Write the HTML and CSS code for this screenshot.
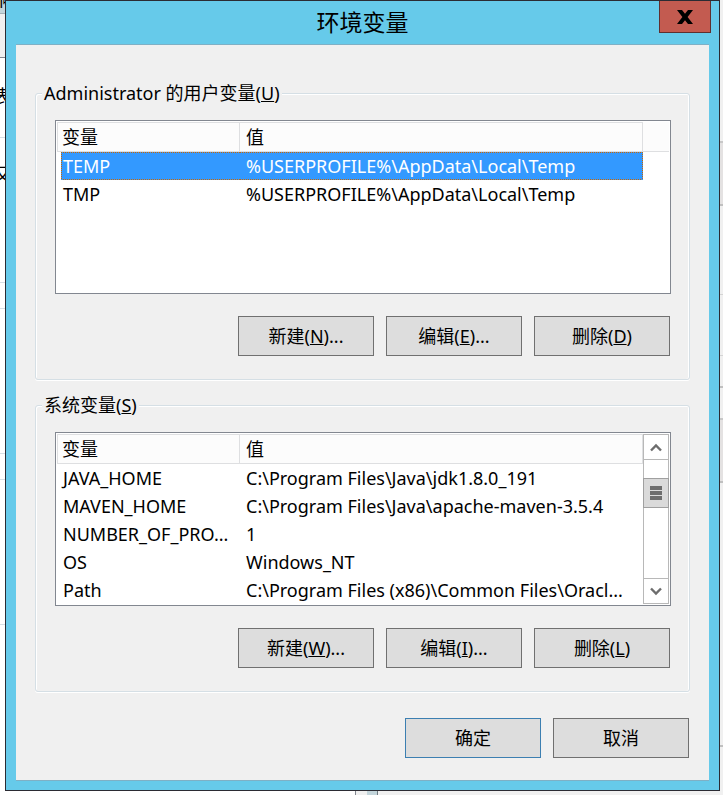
FILE: index.html
```html
<!DOCTYPE html>
<html lang="zh-CN">
<head>
<meta charset="utf-8">
<title>环境变量</title>
<link rel="stylesheet" href="styles.css">
</head>
<body>
<div class="desktop">
  <div class="strip strip-left" aria-hidden="true">
    <div class="seg seg-title">响</div>
    <div class="seg seg-bar"></div>
    <div class="seg seg-a">表</div>
    <div class="seg seg-b">又</div>
    <div class="seg seg-gap"></div>
    <div class="seg seg-c"></div>
    <div class="seg seg-gap"></div>
    <div class="seg seg-c"></div>
    <div class="seg seg-rest"></div>
  </div>

  <main class="dialog">
    <header class="titlebar">
      <h1 class="title">环境变量</h1>
      <button class="close" type="button" aria-label="关闭">
        <svg width="16" height="14" viewBox="0 0 16 14"><path d="M0 0H5L8 3.8L11 0H16L10.6 7L16 14H11L8 10.2L5 14H0L5.4 7Z"/></svg>
      </button>
    </header>

    <form class="client">
      <fieldset class="group">
        <legend>Administrator 的用户变量(<u>U</u>)</legend>
        <div class="list">
          <table class="vars">
            <thead><tr><th class="name">变量</th><th>值</th><th class="gutter"></th></tr></thead>
            <tbody>
              <tr class="selected"><td>TEMP</td><td>%USERPROFILE%\AppData\Local\Temp</td></tr>
              <tr><td>TMP</td><td>%USERPROFILE%\AppData\Local\Temp</td></tr>
            </tbody>
          </table>
        </div>
        <div class="actions">
          <button class="btn" type="button">新建(<u>N</u>)...</button>
          <button class="btn" type="button">编辑(<u>E</u>)...</button>
          <button class="btn" type="button">删除(<u>D</u>)</button>
        </div>
      </fieldset>

      <fieldset class="group">
        <legend>系统变量(<u>S</u>)</legend>
        <div class="list">
          <table class="vars">
            <thead><tr><th class="name">变量</th><th>值</th></tr></thead>
            <tbody>
              <tr><td>JAVA_HOME</td><td>C:\Program Files\Java\jdk1.8.0_191</td></tr>
              <tr><td>MAVEN_HOME</td><td>C:\Program Files\Java\apache-maven-3.5.4</td></tr>
              <tr><td>NUMBER_OF_PRO...</td><td>1</td></tr>
              <tr><td>OS</td><td>Windows_NT</td></tr>
              <tr><td>Path</td><td>C:\Program Files (x86)\Common Files\Oracl...</td></tr>
            </tbody>
          </table>
          <div class="scrollbar">
            <button class="arrow" type="button" aria-label="向上滚动">
              <svg width="12" height="9" viewBox="0 0 12 9"><path d="M1 7.5L6 2.5L11 7.5"/></svg>
            </button>
            <div class="track"><div class="thumb"><i></i><i></i><i></i></div></div>
            <button class="arrow" type="button" aria-label="向下滚动">
              <svg width="12" height="9" viewBox="0 0 12 9"><path d="M1 1.5L6 6.5L11 1.5"/></svg>
            </button>
          </div>
        </div>
        <div class="actions">
          <button class="btn" type="button">新建(<u>W</u>)...</button>
          <button class="btn" type="button">编辑(<u>I</u>)...</button>
          <button class="btn" type="button">删除(<u>L</u>)</button>
        </div>
      </fieldset>

      <div class="actions footer">
        <button class="btn default" type="submit">确定</button>
        <button class="btn" type="button">取消</button>
      </div>
    </form>
  </main>

  <div class="strip strip-right" aria-hidden="true">
    <div class="seg seg-r1"></div>
    <div class="seg seg-r2"></div>
    <div class="seg seg-r3"></div>
    <div class="seg seg-r4"></div>
    <div class="seg seg-r5"></div>
    <div class="seg seg-r6"></div>
    <div class="seg seg-r2"></div>
    <div class="seg seg-rest"></div>
    <div class="seg seg-r7"></div>
  </div>
  <div class="strip strip-bottom" aria-hidden="true">
    <div class="seg seg-page"></div>
    <div class="seg seg-scroll"></div>
    <div class="seg seg-edge"></div>
    <div class="seg seg-panel"></div>
  </div>
</div>
</body>
</html>
```
FILE: styles.css
```css
* { box-sizing: border-box; }

body {
  margin: 0;
  background: #fff;
  color: #000;
  font: 18px/28px "Noto Sans", "Noto Sans CJK SC", sans-serif;
}

button { font: inherit; color: inherit; padding: 0; cursor: default; }

.desktop {
  display: grid;
  grid-template-columns: 5px minmax(0, 1fr) 3px;
  grid-template-rows: 1fr 4px;
  min-height: 100vh;
}

/* windows partly hidden behind the dialog */
.strip { display: flex; flex-direction: column; overflow: hidden; }
.seg { display: flex; align-items: center; justify-content: center; overflow: hidden; }
.seg-title { height: 14px; background: #c3d5db; border-bottom: 1px solid #a3b1b8; align-items: flex-end; }
.seg-bar { height: 44px; background: #f0f0f0; border-bottom: 1px solid #828790; }
.seg-a { height: 80px; border-bottom: 1px solid #d5dfe5; padding-bottom: 4px; }
.seg-b { height: 145px; border-bottom: 1px solid #d5dfe5; align-items: flex-start; padding-top: 22px; }
.seg-gap { height: 26px; border-bottom: 1px solid #d5dfe5; }
.seg-c { height: 145px; border-bottom: 1px solid #d5dfe5; }
.seg-rest { flex: 1; }
.strip-right { background: #f0f0f0; }
.seg-r1 { height: 143px; border-bottom: 2px solid #c8c8c8; }
.seg-r2 { height: 63px; background: #e4e2e2; border-bottom: 2px solid #c0c0c0; }
.seg-r3 { height: 89px; border-bottom: 1px solid #d5d5d5; }
.seg-r4 { height: 61px; border-bottom: 1px solid #d5d5d5; }
.seg-r5 { height: 32px; border-bottom: 2px solid #c0c0c0; }
.seg-r6 { height: 32px; border-bottom: 2px solid #c8c8c8; }
.seg-r7 { height: 46px; border-top: 2px solid #c0c0c0; }
.strip-bottom { grid-column: 1 / -1; flex-direction: row; background: #f0f0f0; }
.seg-page { flex: 0 0 356px; background: #fff; border-right: 1px solid #828790; }
.seg-scroll { width: 11px; }
.seg-edge { width: 11px; background: #c3d5db; border-right: 1px solid #6f7a80; }

.dialog {
  display: flex;
  flex-direction: column;
  padding: 0 10px 9px;
  background: #66caea;
  border: 1px solid #2b2b33;
}

.titlebar {
  display: grid;
  grid-template-columns: 1fr auto 1fr;
  height: 43px;
}
.title {
  grid-column: 2;
  margin: 0;
  font-size: 23px;
  font-weight: 400;
  line-height: 43px;
}
.close {
  justify-self: end;
  display: flex;
  align-items: center;
  justify-content: center;
  width: 52px;
  height: 32px;
  margin-right: -2px;
  background: #c35b50;
  border: 1px solid #5f2f2f;
  border-top: 0;
}

.client {
  flex: 1;
  padding: 34px 19px 22px;
  background: #f0f0f0;
  border-top: 1px solid #7fb0c5;
  border-bottom: 1px solid #7fb0c5;
}

.group {
  min-width: 0;
  margin: 0 0 11px;
  padding: 13px 18px 23px 19px;
  border: 1px solid #d5dfe5;
  border-radius: 3px;
  box-shadow: inset 1px 1px #fff, inset -1px 0 #fff, 0 1px #fff;
}
.group legend {
  margin-left: -13px;
  padding: 0 2px;
  background: #f0f0f0;
}

.list {
  display: flex;
  align-items: flex-start;
  height: 174px;
  padding: 1px;
  background: #fff;
  border: 1px solid #828790;
}
.vars {
  flex: 1;
  min-width: 0;
  table-layout: fixed;
  border-spacing: 0;
  text-align: left;
  white-space: nowrap;
}
.vars th {
  height: 30px;
  padding: 0 6px;
  font-weight: 400;
  background: #fcfcfc;
  border: solid #dedfe1;
  border-width: 1px 1px 1px 0;
}
.vars .name { width: 183px; padding-left: 4px; border-left-width: 1px; }
.vars .gutter { width: 26px; border-top-color: #fcfcfc; border-right: 0; }
.vars td { height: 28px; padding: 0 6px; overflow: hidden; }

/* selection bar with a dotted focus line round it */
.vars .selected td {
  --dots-x: repeating-linear-gradient(90deg, #c60 0 1px, #39f 1px 2px);
  --dots-y: repeating-linear-gradient(#c60 0 1px, #39f 1px 2px);
  color: #fff;
  background:
    var(--dots-y) right / 1px 100% no-repeat,
    var(--dots-x) top / 100% 1px no-repeat,
    var(--dots-x) bottom / 100% 1px no-repeat,
    #39f;
}
.vars .selected td:first-child {
  padding-left: 2px;
  border-left: 4px solid #fff;
  background:
    var(--dots-y) left / 1px 100% no-repeat,
    var(--dots-x) top / 100% 1px no-repeat,
    var(--dots-x) bottom / 100% 1px no-repeat,
    #39f;
}

.scrollbar { display: flex; flex-direction: column; width: 26px; height: 100%; }
.arrow {
  display: flex;
  align-items: center;
  justify-content: center;
  height: 26px;
  background: #fff;
  border: 1px solid #b8b8b8;
}
.arrow path { fill: none; stroke: #6d6d6d; stroke-width: 2.4; }
.track { flex: 1; padding-top: 18px; border: solid #b8b8b8; border-width: 0 1px; }
.thumb {
  display: flex;
  flex-direction: column;
  align-items: center;
  justify-content: center;
  gap: 1px;
  height: 30px;
  margin: 0 -1px;
  background: #dadada;
  border: 1px solid #a0a0a0;
}
.thumb i { width: 12px; height: 4px; background: #6d6d6d; }

.actions {
  display: flex;
  justify-content: flex-end;
  gap: 12px;
  margin-top: 22px;
  padding-right: 1px;
}
.btn {
  width: 136px;
  height: 40px;
  background: #ddd;
  border: 1px solid #707070;
}
.btn.default { border-color: #3c7fb1; }
.footer { margin-top: 26px; }
```
